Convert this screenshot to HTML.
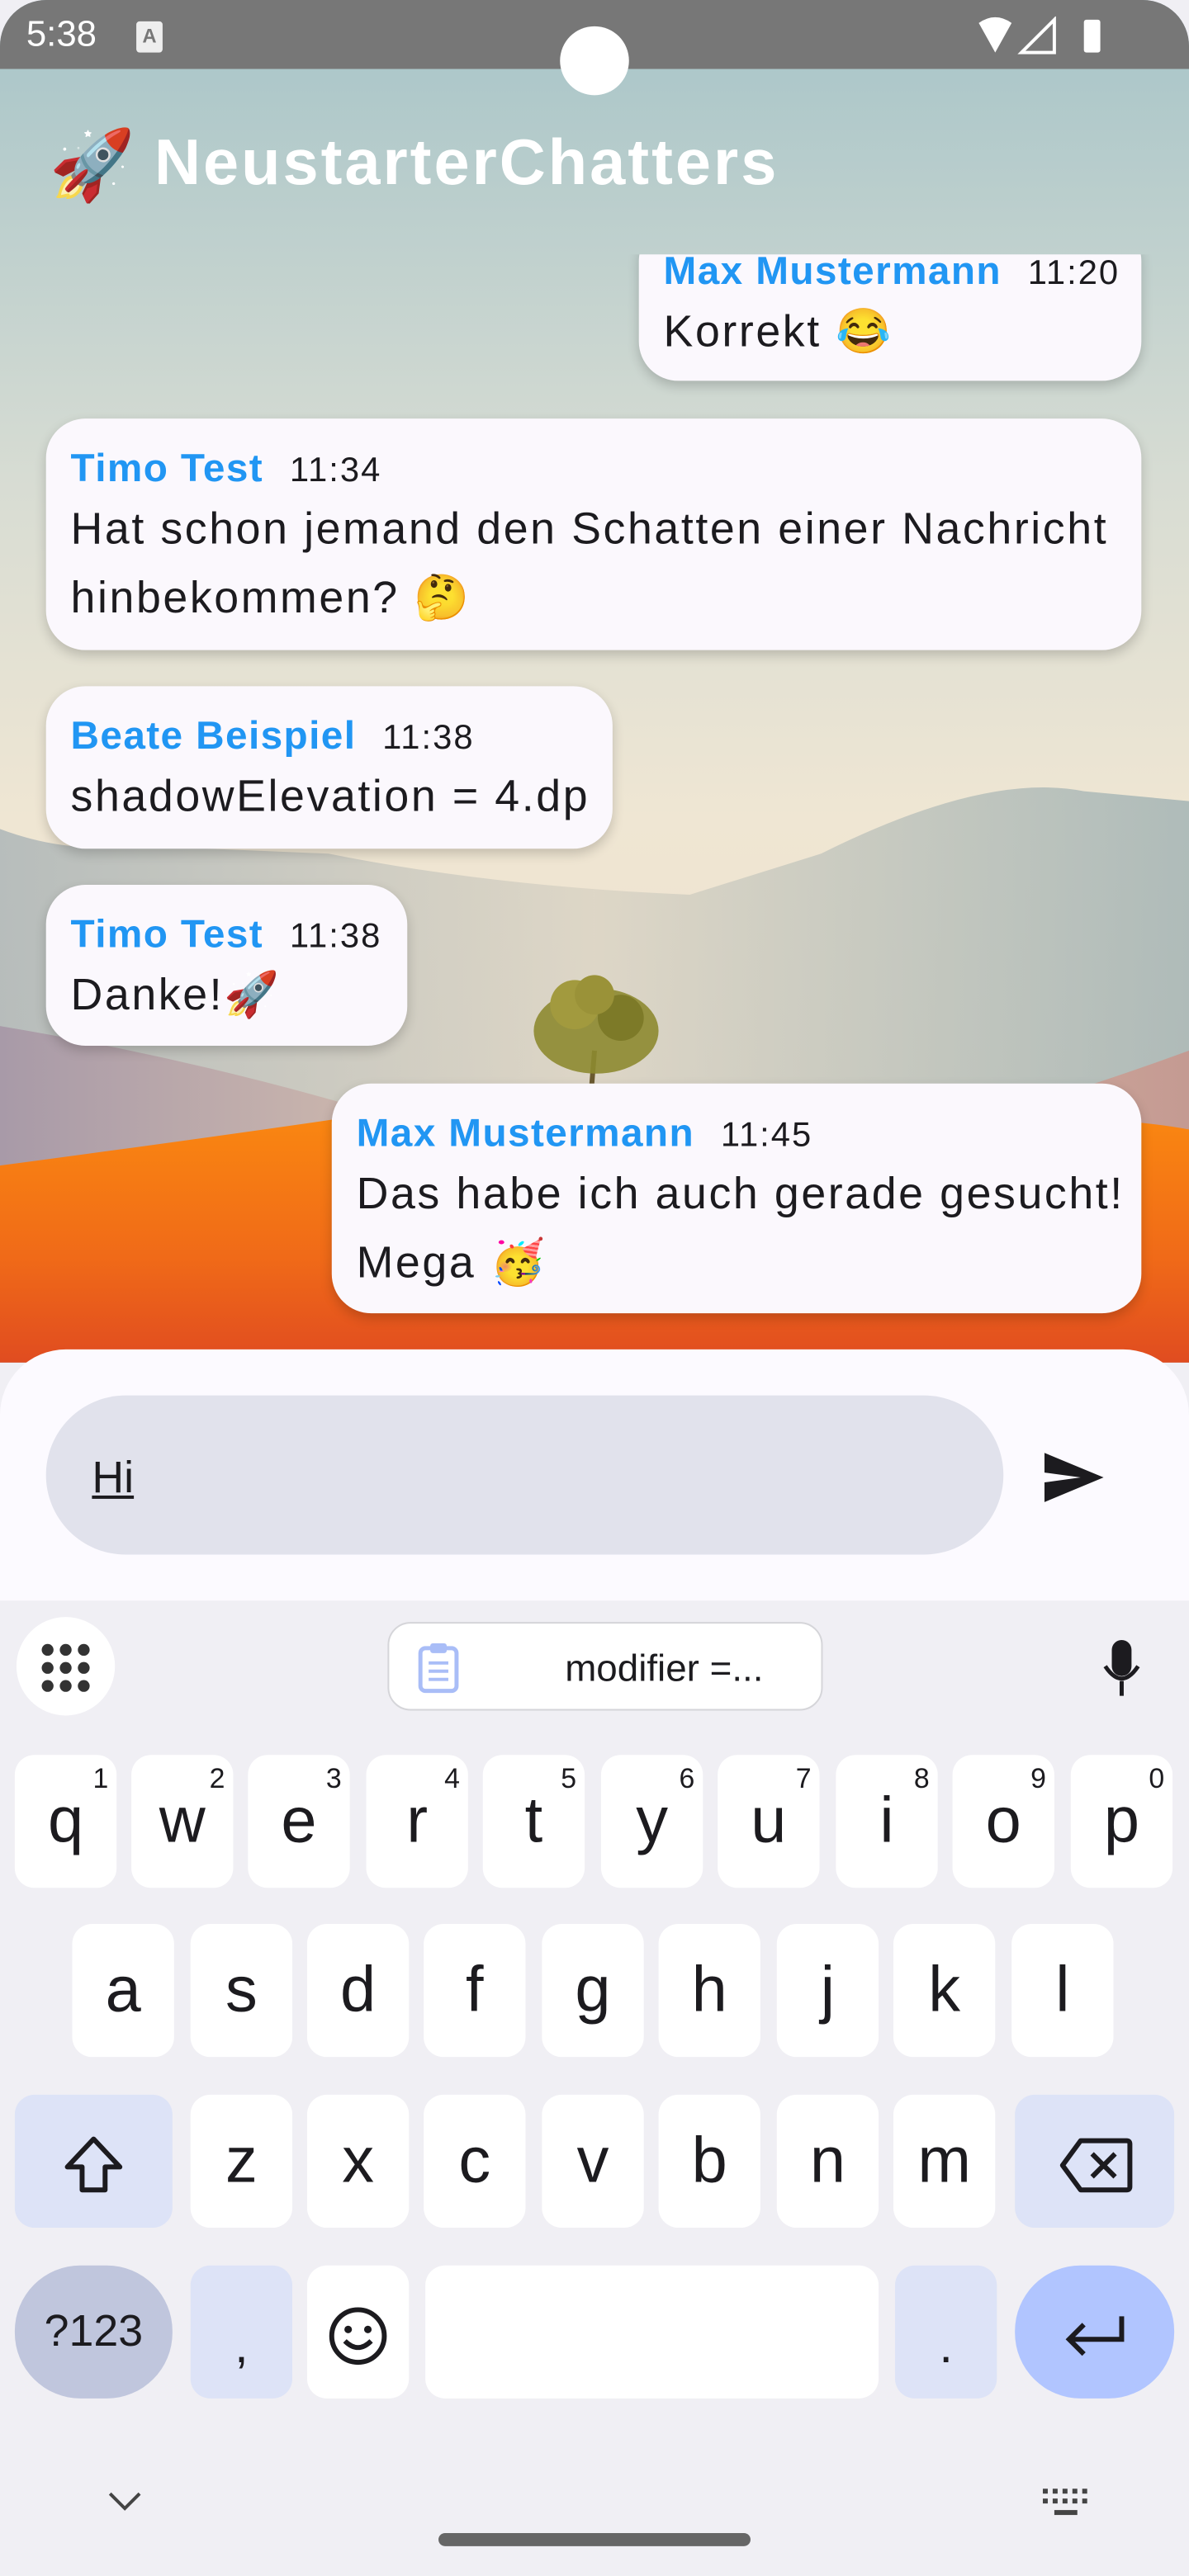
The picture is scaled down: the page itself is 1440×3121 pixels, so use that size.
<!DOCTYPE html>
<html><head><meta charset="utf-8"><style>
html,body{margin:0;padding:0;width:1440px;height:3120px;overflow:hidden;background:#f0eff4}
#s{position:absolute;left:0;top:0;width:724px;height:1569px;transform:scale(1.98895);transform-origin:0 0;overflow:hidden;font-family:"Liberation Sans",sans-serif;border-radius:28px 28px 0 0;background:#f0eff4}
.a{position:absolute}
.b{position:absolute;background:#fbf8fd;border-radius:24px;box-shadow:0 3px 7px rgba(0,0,0,.18);white-space:nowrap}
.n{position:absolute;left:15px;top:17px;font-size:24px;font-weight:bold;color:#2196f3;letter-spacing:.7px}
.n span{font-weight:normal;color:#1c1b1f;font-size:21px;margin-left:16px;letter-spacing:1px}
.t{position:absolute;left:15px;top:46px;font-size:27px;color:#1c1b1f;line-height:42px;letter-spacing:1.3px}
.k{position:absolute;width:62px;height:81px;background:#fff;border-radius:12px;font-size:39px;color:#1c1b1f;text-align:center;line-height:81px}
.k sup{position:absolute;right:5px;top:-26px;font-size:17px}
.k2{background:#dde3f7}
</style></head><body><div id="s">
<svg class="a" style="left:0;top:0" width="724" height="830" viewBox="0 0 724 830">
<defs>
<linearGradient id="sky" x1="0" y1="0" x2="0" y2="1"><stop offset="0" stop-color="#a6c4c8"/><stop offset=".35" stop-color="#d7dcd3"/><stop offset=".6" stop-color="#efe6d3"/><stop offset="1" stop-color="#eedcc8"/></linearGradient>
<linearGradient id="dune" x1="0" y1="0" x2="0" y2="1"><stop offset="0" stop-color="#fb8a10"/><stop offset=".6" stop-color="#f06a18"/><stop offset="1" stop-color="#e04c20"/></linearGradient>
<linearGradient id="mt" x1="0" y1="0" x2="1" y2="0"><stop offset="0" stop-color="#a9b3b6"/><stop offset=".5" stop-color="#d9d3c4"/><stop offset="1" stop-color="#9fb1b3"/></linearGradient>
<linearGradient id="hill" x1="0" y1="0" x2="1" y2="0"><stop offset="0" stop-color="#a89aa8"/><stop offset=".5" stop-color="#e2c8b0"/><stop offset="1" stop-color="#c49a92"/></linearGradient>
</defs>
<rect width="724" height="830" fill="url(#sky)"/>
<path d="M0 505 Q40 520 80 515 L200 520 Q300 540 420 545 L500 520 Q600 470 660 482 L724 488 L724 830 L0 830Z" fill="url(#mt)" opacity=".8"/>
<path d="M0 625 Q150 650 300 700 L420 720 Q560 700 724 640 L724 830 L0 830Z" fill="url(#hill)"/>
<path d="M0 710 Q150 690 250 675 Q320 668 360 670 Q500 680 620 682 Q680 680 724 688 L724 830 L0 830Z" fill="url(#dune)"/>
<path d="M360 665 L362 640" stroke="#6b5a30" stroke-width="3"/>
<ellipse cx="363" cy="628" rx="38" ry="26" fill="#8d8a30" opacity=".9"/><circle cx="350" cy="612" r="15" fill="#a29a3e"/><circle cx="378" cy="620" r="14" fill="#7d7a28"/><circle cx="362" cy="606" r="12" fill="#9a9238"/>
</svg>
<div class="a" style="left:0;top:0;width:724px;height:42px;background:#777"></div>
<div class="a" style="left:16px;top:8px;color:#fff;font-size:22px">5:38</div>
<div class="a" style="left:83px;top:13px;width:16px;height:19px;background:#eee;border-radius:2px;font-size:12px;font-weight:bold;color:#777;text-align:center;line-height:18px">A</div>
<div class="a" style="left:341px;top:16px;width:42px;height:42px;border-radius:50%;background:#fff"></div>
<svg class="a" style="left:594px;top:10px" width="86" height="24"><path d="M2 4 Q12 -3 22 4 L12 22Z" fill="#fff"/><path d="M48 2 L48 22 L28 22Z" fill="none" stroke="#fff" stroke-width="2"/><rect x="66" y="2" width="10" height="20" rx="1.5" fill="#fff"/></svg>
<div class="a" style="left:30px;top:76px;font-size:42px;line-height:50px">🚀</div>
<div class="a" style="left:94px;top:78px;font-size:39px;font-weight:bold;color:#fff;letter-spacing:1.5px">NeustarterChatters</div>
<div class="a" style="left:0;top:155px;width:724px;height:667px;overflow:hidden">
<div class="b" style="left:389px;top:-20px;width:306px;height:97px"><div class="n" style="top:17px">Max Mustermann<span>11:20</span></div><div class="t" style="top:46px">Korrekt 😂</div></div>
<div class="b" style="left:28px;top:100px;width:667px;height:141px"><div class="n">Timo Test<span>11:34</span></div><div class="t">Hat schon jemand den Schatten einer Nachricht<br>hinbekommen? 🤔</div></div>
<div class="b" style="left:28px;top:263px;width:345px;height:99px"><div class="n">Beate Beispiel<span>11:38</span></div><div class="t">shadowElevation = 4.dp</div></div>
<div class="b" style="left:28px;top:384px;width:220px;height:98px"><div class="n">Timo Test<span>11:38</span></div><div class="t">Danke!🚀</div></div>
<div class="b" style="left:202px;top:505px;width:493px;height:140px"><div class="n">Max Mustermann<span>11:45</span></div><div class="t">Das habe ich auch gerade gesucht!<br>Mega 🥳</div></div>
</div>
<div class="a" style="left:0;top:822px;width:724px;height:160px;background:#fcfaff;border-radius:40px 40px 0 0"></div>
<div class="a" style="left:28px;top:850px;width:583px;height:97px;background:#e1e2ec;border-radius:49px"></div>
<div class="a" style="left:56px;top:885px;font-size:27px;color:#1c1b1f;text-decoration:underline">Hi</div>
<svg class="a" style="left:634px;top:883px" width="40" height="34"><path d="M2 2 L38 17 L2 32 L2 20 L24 17 L2 14Z" fill="#1c1b1f"/></svg>
<div class="a" style="left:0;top:975px;width:724px;height:594px;background:#f0eff4"></div>
<div class="a" style="left:10px;top:985px;width:60px;height:60px;border-radius:50%;background:#fff"></div>
<svg class="a" style="left:24px;top:1000px" width="32" height="32"><g fill="#333"><circle cx="5" cy="5" r="3.6"/><circle cx="16" cy="5" r="3.6"/><circle cx="27" cy="5" r="3.6"/><circle cx="5" cy="16" r="3.6"/><circle cx="16" cy="16" r="3.6"/><circle cx="27" cy="16" r="3.6"/><circle cx="5" cy="27" r="3.6"/><circle cx="16" cy="27" r="3.6"/><circle cx="27" cy="27" r="3.6"/></g></svg>
<div class="a" style="left:236px;top:988px;width:263px;height:52px;background:#fff;border:1.5px solid #d5d5d9;border-radius:14px"></div>
<svg class="a" style="left:253px;top:1000px" width="28" height="32"><rect x="3" y="4" width="22" height="26" rx="3" fill="none" stroke="#a9bdf7" stroke-width="2.5"/><rect x="9" y="1" width="10" height="6" rx="1.5" fill="#a9bdf7"/><path d="M8 13h12M8 18h12M8 23h12" stroke="#a9bdf7" stroke-width="2"/></svg>
<div class="a" style="left:344px;top:1003px;font-size:23px;color:#1c1b1f">modifier =...</div>
<svg class="a" style="left:670px;top:998px" width="26" height="36"><rect x="7" y="1" width="12" height="22" rx="6" fill="#1c1b1f"/><path d="M3 17 Q13 32 23 17" fill="none" stroke="#1c1b1f" stroke-width="2.5"/><path d="M13 26v9" stroke="#1c1b1f" stroke-width="2.5"/></svg>
<div class="k" style="left:9px;top:1069px">q<sup>1</sup></div>
<div class="k" style="left:80px;top:1069px">w<sup>2</sup></div>
<div class="k" style="left:151px;top:1069px">e<sup>3</sup></div>
<div class="k" style="left:223px;top:1069px">r<sup>4</sup></div>
<div class="k" style="left:294px;top:1069px">t<sup>5</sup></div>
<div class="k" style="left:366px;top:1069px">y<sup>6</sup></div>
<div class="k" style="left:437px;top:1069px">u<sup>7</sup></div>
<div class="k" style="left:509px;top:1069px">i<sup>8</sup></div>
<div class="k" style="left:580px;top:1069px">o<sup>9</sup></div>
<div class="k" style="left:652px;top:1069px">p<sup>0</sup></div>
<div class="k" style="left:44px;top:1172px">a</div>
<div class="k" style="left:116px;top:1172px">s</div>
<div class="k" style="left:187px;top:1172px">d</div>
<div class="k" style="left:258px;top:1172px">f</div>
<div class="k" style="left:330px;top:1172px">g</div>
<div class="k" style="left:401px;top:1172px">h</div>
<div class="k" style="left:473px;top:1172px">j</div>
<div class="k" style="left:544px;top:1172px">k</div>
<div class="k" style="left:616px;top:1172px">l</div>
<div class="k k2" style="left:9px;top:1276px;width:96px"><svg width="40" height="40" style="vertical-align:middle"><path d="M20 4 L36 21 L27 21 L27 35 L13 35 L13 21 L4 21Z" fill="none" stroke="#1c1b1f" stroke-width="3" stroke-linejoin="round"/></svg></div>
<div class="k" style="left:116px;top:1276px">z</div>
<div class="k" style="left:187px;top:1276px">x</div>
<div class="k" style="left:258px;top:1276px">c</div>
<div class="k" style="left:330px;top:1276px">v</div>
<div class="k" style="left:401px;top:1276px">b</div>
<div class="k" style="left:473px;top:1276px">n</div>
<div class="k" style="left:544px;top:1276px">m</div>
<div class="k k2" style="left:618px;top:1276px;width:97px"><svg width="46" height="36" style="vertical-align:middle"><path d="M14 3 L42 3 Q44 3 44 5 L44 31 Q44 33 42 33 L14 33 L3 18Z" fill="none" stroke="#1c1b1f" stroke-width="3" stroke-linejoin="round"/><path d="M21 11 L35 25 M35 11 L21 25" stroke="#1c1b1f" stroke-width="3"/></svg></div>
<div class="k" style="left:9px;top:1380px;width:96px;background:#c0c6dd;border-radius:40px;font-size:27px">?123</div>
<div class="k k2" style="left:116px;top:1380px;line-height:100px;font-size:30px">,</div>
<div class="k" style="left:187px;top:1380px"><svg width="38" height="38" style="vertical-align:middle"><circle cx="19" cy="19" r="16" fill="none" stroke="#1c1b1f" stroke-width="3"/><circle cx="13" cy="15" r="2.3" fill="#1c1b1f"/><circle cx="25" cy="15" r="2.3" fill="#1c1b1f"/><path d="M11 22 Q19 30 27 22" fill="none" stroke="#1c1b1f" stroke-width="3"/></svg></div>
<div class="k" style="left:259px;top:1380px;width:276px"></div>
<div class="k k2" style="left:545px;top:1380px;line-height:100px;font-size:30px">.</div>
<div class="k" style="left:618px;top:1380px;width:97px;background:#b1c5ff;border-radius:40px"><svg width="40" height="30" style="vertical-align:middle"><path d="M36 3 L36 17 L5 17 M13 8 L4 17 L13 26" fill="none" stroke="#1c1b1f" stroke-width="3"/></svg></div>
<svg class="a" style="left:65px;top:1517px" width="22" height="14"><path d="M2 2 L11 11 L20 2" fill="none" stroke="#444" stroke-width="2"/></svg>
<svg class="a" style="left:634px;top:1515px" width="30" height="20"><g fill="#444"><rect x="1" y="1" width="3" height="3"/><rect x="7" y="1" width="3" height="3"/><rect x="13" y="1" width="3" height="3"/><rect x="19" y="1" width="3" height="3"/><rect x="25" y="1" width="3" height="3"/><rect x="1" y="7" width="3" height="3"/><rect x="7" y="7" width="3" height="3"/><rect x="13" y="7" width="3" height="3"/><rect x="19" y="7" width="3" height="3"/><rect x="25" y="7" width="3" height="3"/><rect x="8" y="14" width="14" height="3"/></g></svg>
<div class="a" style="left:267px;top:1543px;width:190px;height:8px;border-radius:4px;background:#666"></div>
</div></body></html>
